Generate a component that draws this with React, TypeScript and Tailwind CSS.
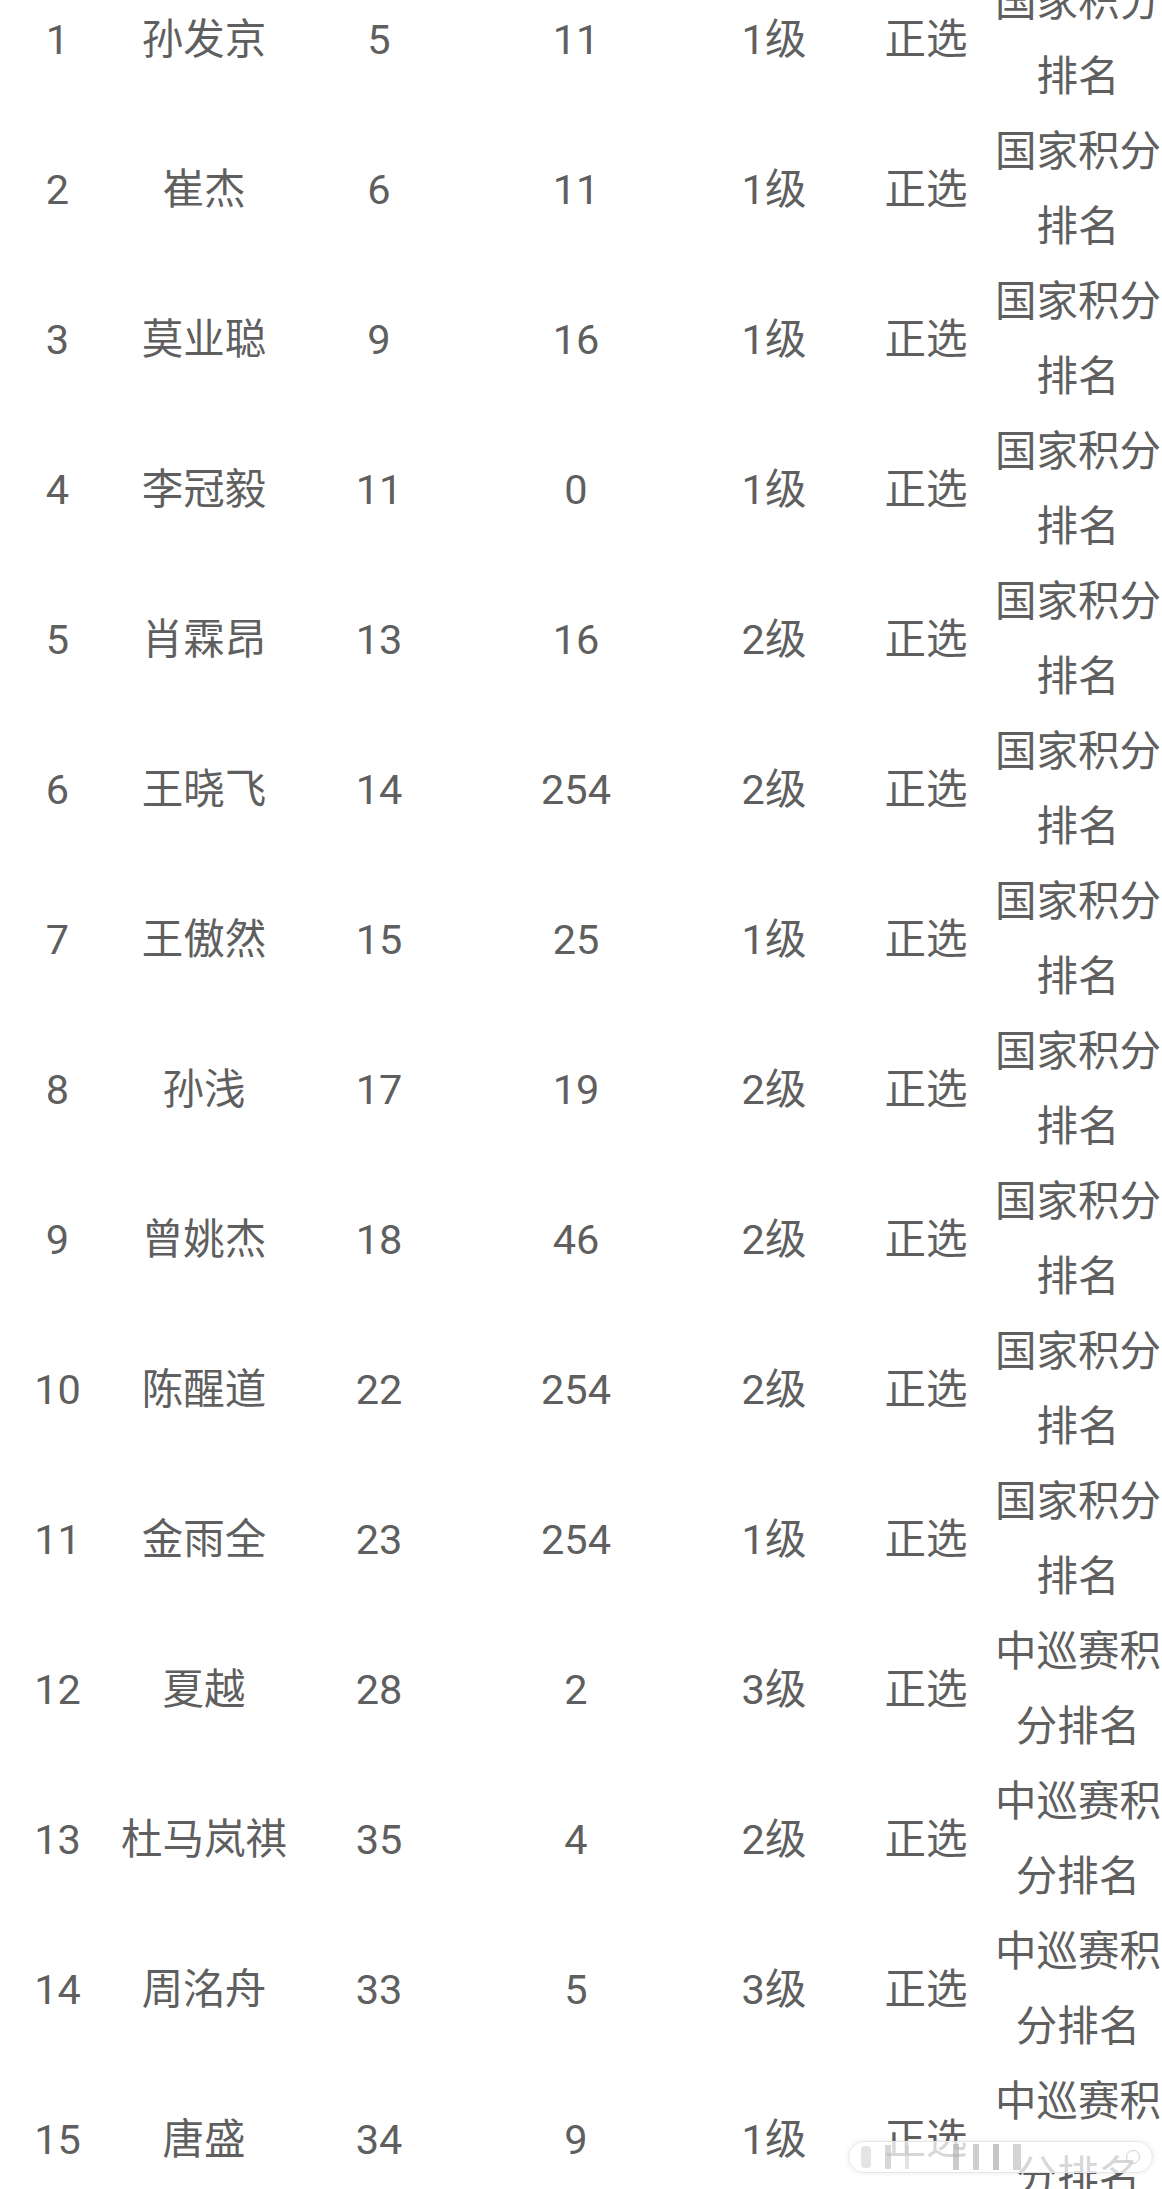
const rows = [
  { no: 1, name: "孙发京", a: "5", b: "11", level: "1级", type: "正选", source: "国家积分排名" },
  { no: 2, name: "崔杰", a: "6", b: "11", level: "1级", type: "正选", source: "国家积分排名" },
  { no: 3, name: "莫业聪", a: "9", b: "16", level: "1级", type: "正选", source: "国家积分排名" },
  { no: 4, name: "李冠毅", a: "11", b: "0", level: "1级", type: "正选", source: "国家积分排名" },
  { no: 5, name: "肖霖昂", a: "13", b: "16", level: "2级", type: "正选", source: "国家积分排名" },
  { no: 6, name: "王晓飞", a: "14", b: "254", level: "2级", type: "正选", source: "国家积分排名" },
  { no: 7, name: "王傲然", a: "15", b: "25", level: "1级", type: "正选", source: "国家积分排名" },
  { no: 8, name: "孙浅", a: "17", b: "19", level: "2级", type: "正选", source: "国家积分排名" },
  { no: 9, name: "曾姚杰", a: "18", b: "46", level: "2级", type: "正选", source: "国家积分排名" },
  { no: 10, name: "陈醒道", a: "22", b: "254", level: "2级", type: "正选", source: "国家积分排名" },
  { no: 11, name: "金雨全", a: "23", b: "254", level: "1级", type: "正选", source: "国家积分排名" },
  { no: 12, name: "夏越", a: "28", b: "2", level: "3级", type: "正选", source: "中巡赛积分排名" },
  { no: 13, name: "杜马岚祺", a: "35", b: "4", level: "2级", type: "正选", source: "中巡赛积分排名" },
  { no: 14, name: "周洺舟", a: "33", b: "5", level: "3级", type: "正选", source: "中巡赛积分排名" },
  { no: 15, name: "唐盛", a: "34", b: "9", level: "1级", type: "正选", source: "中巡赛积分排名" },
];

const App = () => {
  return (
    <div
      className="relative w-[1162px] h-[2189px] overflow-hidden bg-white text-[#5f5f5f] text-[41.5px] leading-[75px]"
      style={{ fontFamily: 'Roboto, "Noto Sans CJK SC", "Noto Sans", sans-serif' }}
    >
      {/* table, scrolled so the first row is cut at the top */}
      <div className="-mt-[36px] flex flex-col">
        {rows.map((r) => (
          <div
            key={r.no}
            className="grid grid-cols-[115px_178px_172px_222px_174px_130px_174px] items-center h-[150px] text-center"
          >
            <div>{r.no}</div>
            <div className="whitespace-nowrap">{r.name}</div>
            <div>{r.a}</div>
            <div>{r.b}</div>
            <div>{r.level}</div>
            <div>{r.type}</div>
            <div className="break-all">{r.source}</div>
          </div>
        ))}
      </div>

      {/* watermark */}
      <div className="absolute left-[848px] top-[2141px] w-[305px] h-[32px] rounded-full bg-white/75 border border-[#e6e6e6] shadow-[0_0_6px_rgba(0,0,0,0.08)] flex items-center gap-[14px] px-[12px]">
        <div className="w-[10px] h-[22px] rounded-sm bg-[#d8d8d8]/70" />
        <div className="w-[6px] h-[24px] bg-[#bdbdbd]/60" />
        <div className="w-[4px] h-[24px] bg-[#c8c8c8]/50" />
        <div className="w-[6px] h-[26px] bg-[#a8a8a8]/60 ml-[30px]" />
        <div className="w-[6px] h-[26px] bg-[#b0b0b0]/60" />
        <div className="w-[6px] h-[26px] bg-[#a0a0a0]/60" />
        <div className="w-[8px] h-[26px] bg-[#b8b8b8]/60" />
        <div className="ml-auto w-[14px] h-[14px] rounded-full border border-[#cfcfcf]" />
      </div>
    </div>
  );
};

export default App;
